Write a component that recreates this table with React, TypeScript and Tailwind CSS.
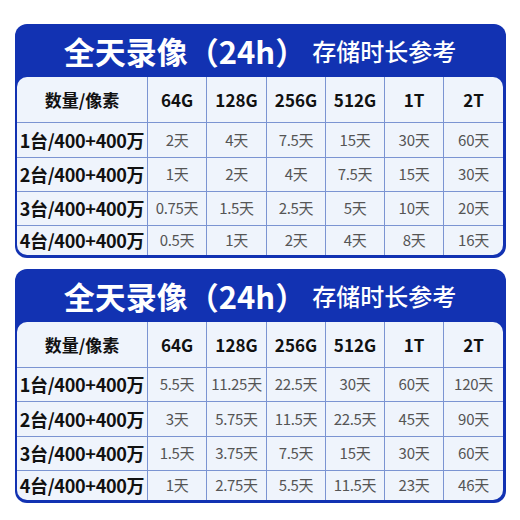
const cols = ['64G', '128G', '256G', '512G', '1T', '2T'];

const tables = [
    {
        rows: [
            ['2天', '4天', '7.5天', '15天', '30天', '60天'],
            ['1天', '2天', '4天', '7.5天', '15天', '30天'],
            ['0.75天', '1.5天', '2.5天', '5天', '10天', '20天'],
            ['0.5天', '1天', '2天', '4天', '8天', '16天'],
        ],
        heights: ['h-[35px]', 'h-[34px]', 'h-[34px]', 'h-[29px]'],
    },
    {
        rows: [
            ['5.5天', '11.25天', '22.5天', '30天', '60天', '120天'],
            ['3天', '5.75天', '11.5天', '22.5天', '45天', '90天'],
            ['1.5天', '3.75天', '7.5天', '15天', '30天', '60天'],
            ['1天', '2.75天', '5.5天', '11.5天', '23天', '46天'],
        ],
        heights: ['h-[34px]', 'h-[35px]', 'h-[34px]', 'h-[29px]'],
    },
];

function Panel({ rows, heights }: { rows: string[][]; heights: string[] }) {
    return (
        <div className="w-[491px] rounded-[12px] bg-[#1232b2] pl-[2px] pr-[3px] pb-[3px]">
            {/* Title */}
            <div className="h-[53px] flex items-center justify-center gap-[6px] text-white">
                <span className="text-[31px] font-bold leading-none">全天录像（24h）</span>
                <span className="text-[24px] font-medium leading-none">存储时长参考</span>
            </div>

            {/* Table */}
            <div className="rounded-[10px] overflow-hidden bg-[#eff4fc]">
                <div className="grid grid-cols-[131px_59px_60px_59px_59px_59px_59px] h-[46px] border-b border-[#7b94d2]">
                    <div className="flex items-center justify-center border-r border-[#7b94d2] text-[17px] font-bold text-[#111]">数量/像素</div>
                    {cols.map((c, i) => (
                        <div
                            key={c}
                            className={`flex items-center justify-center text-[17px] font-bold text-[#111] ${i < cols.length - 1 ? 'border-r border-[#7b94d2]' : ''}`}
                        >
                            {c}
                        </div>
                    ))}
                </div>
                {rows.map((row, r) => (
                    <div
                        key={r}
                        className={`grid grid-cols-[131px_59px_60px_59px_59px_59px_59px] ${heights[r]} ${r < rows.length - 1 ? 'border-b border-[#7b94d2]' : ''}`}
                    >
                        <div className="flex items-center justify-center border-r border-[#7b94d2] text-[18px] font-bold text-[#111] tracking-[-0.3px] whitespace-nowrap">
                            {r + 1}台/400+400万
                        </div>
                        {row.map((v, i) => (
                            <div
                                key={i}
                                className={`flex items-center justify-center text-[15px] text-[#555] whitespace-nowrap tracking-[-0.3px] ${i < row.length - 1 ? 'border-r border-[#7b94d2]' : ''}`}
                            >
                                {v}
                            </div>
                        ))}
                    </div>
                ))}
            </div>
        </div>
    );
}

export default function App() {
    return (
        <div
            className="w-[520px] h-[520px] bg-white pt-[24px] pl-[15px] flex flex-col gap-[11px]"
            style={{ fontFamily: '"Noto Sans CJK SC", "Noto Sans", sans-serif' }}
        >
            {tables.map((t, i) => (
                <Panel key={i} rows={t.rows} heights={t.heights} />
            ))}
        </div>
    );
}
